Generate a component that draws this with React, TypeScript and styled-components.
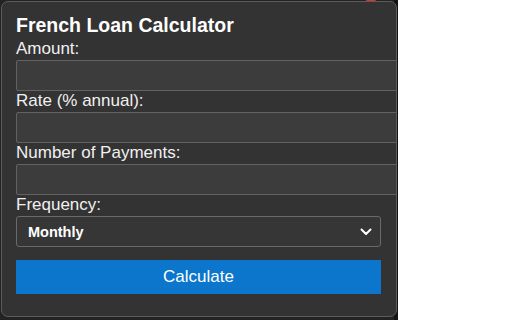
import React from "react";
import styled, { createGlobalStyle } from "styled-components";

const Global = createGlobalStyle`
  html, body { margin: 0; padding: 0; background: #ffffff; }
  * { font-family: "Liberation Sans", Arial, sans-serif; }
`;

const Frame = styled.div`
  position: relative;
  width: 398px;
  height: 320px;
  background: #232323;
  border-right: 4px solid #141414;
  padding: 1px 0 0 1px;
  box-sizing: border-box;
`;

const Badge = styled.div`
  position: absolute;
  left: 363px;
  top: -11px;
  width: 16px;
  height: 13px;
  border-radius: 50%;
  background: #d8382c;
`;

const Panel = styled.div`
  position: relative;
  width: 396px;
  height: 316px;
  box-sizing: border-box;
  background: #333333;
  border: 1px solid #5c5c5c;
  border-radius: 7px;
  overflow: hidden;
  padding: 12px 14px 0 14px;
  display: flex;
  flex-direction: column;
`;

const Title = styled.h1`
  margin: 0 0 3px 0;
  font-size: 19.5px;
  line-height: 22px;
  font-weight: 700;
  color: #ffffff;
`;

const Label = styled.label`
  display: block;
  font-size: 17px;
  line-height: 19px;
  color: #f0f0f0;
  margin-bottom: 2px;
`;

const Field = styled.div`
  display: flex;
  flex-direction: column;
`;

const Input = styled.input`
  width: 100%;
  box-sizing: content-box;
  height: 29px;
  padding: 0 10px;
  margin: 0;
  background: #3c3c3c;
  border: 1px solid #626262;
  border-radius: 2px;
  color: #fff;
  font-size: 14px;
  outline: none;
`;

const SelectBox = styled.div`
  position: relative;
  width: 365px;
  height: 31px;
  box-sizing: border-box;
  background: #363636;
  border: 1px solid #6a6a6a;
  border-radius: 3px;
  display: flex;
  align-items: center;
  justify-content: space-between;
  padding: 0 8px 0 11px;
  color: #ffffff;
  font-size: 14.5px;
  font-weight: 700;
`;

const Button = styled.button`
  margin-top: 13px;
  width: 365px;
  height: 34px;
  border: none;
  border-radius: 0;
  background: #0b76cc;
  color: #ffffff;
  font-size: 17px;
  cursor: pointer;
`;

export default function App() {
  return (
    <>
      <Global />
      <Frame>
        <Badge />
        <Panel>
          <Title>French Loan Calculator</Title>
          <Field>
            <Label>Amount:</Label>
            <Input type="text" />
          </Field>
          <Field>
            <Label>Rate (% annual):</Label>
            <Input type="text" />
          </Field>
          <Field>
            <Label>Number of Payments:</Label>
            <Input type="text" />
          </Field>
          <Field>
            <Label>Frequency:</Label>
            <SelectBox>
              <span>Monthly</span>
              <svg width="12" height="8" viewBox="0 0 12 8">
                <path d="M1.5 1.5 L6 6 L10.5 1.5" fill="none" stroke="#ffffff" strokeWidth="2" strokeLinecap="round" strokeLinejoin="round" />
              </svg>
            </SelectBox>
          </Field>
          <Button>Calculate</Button>
        </Panel>
      </Frame>
    </>
  );
}
